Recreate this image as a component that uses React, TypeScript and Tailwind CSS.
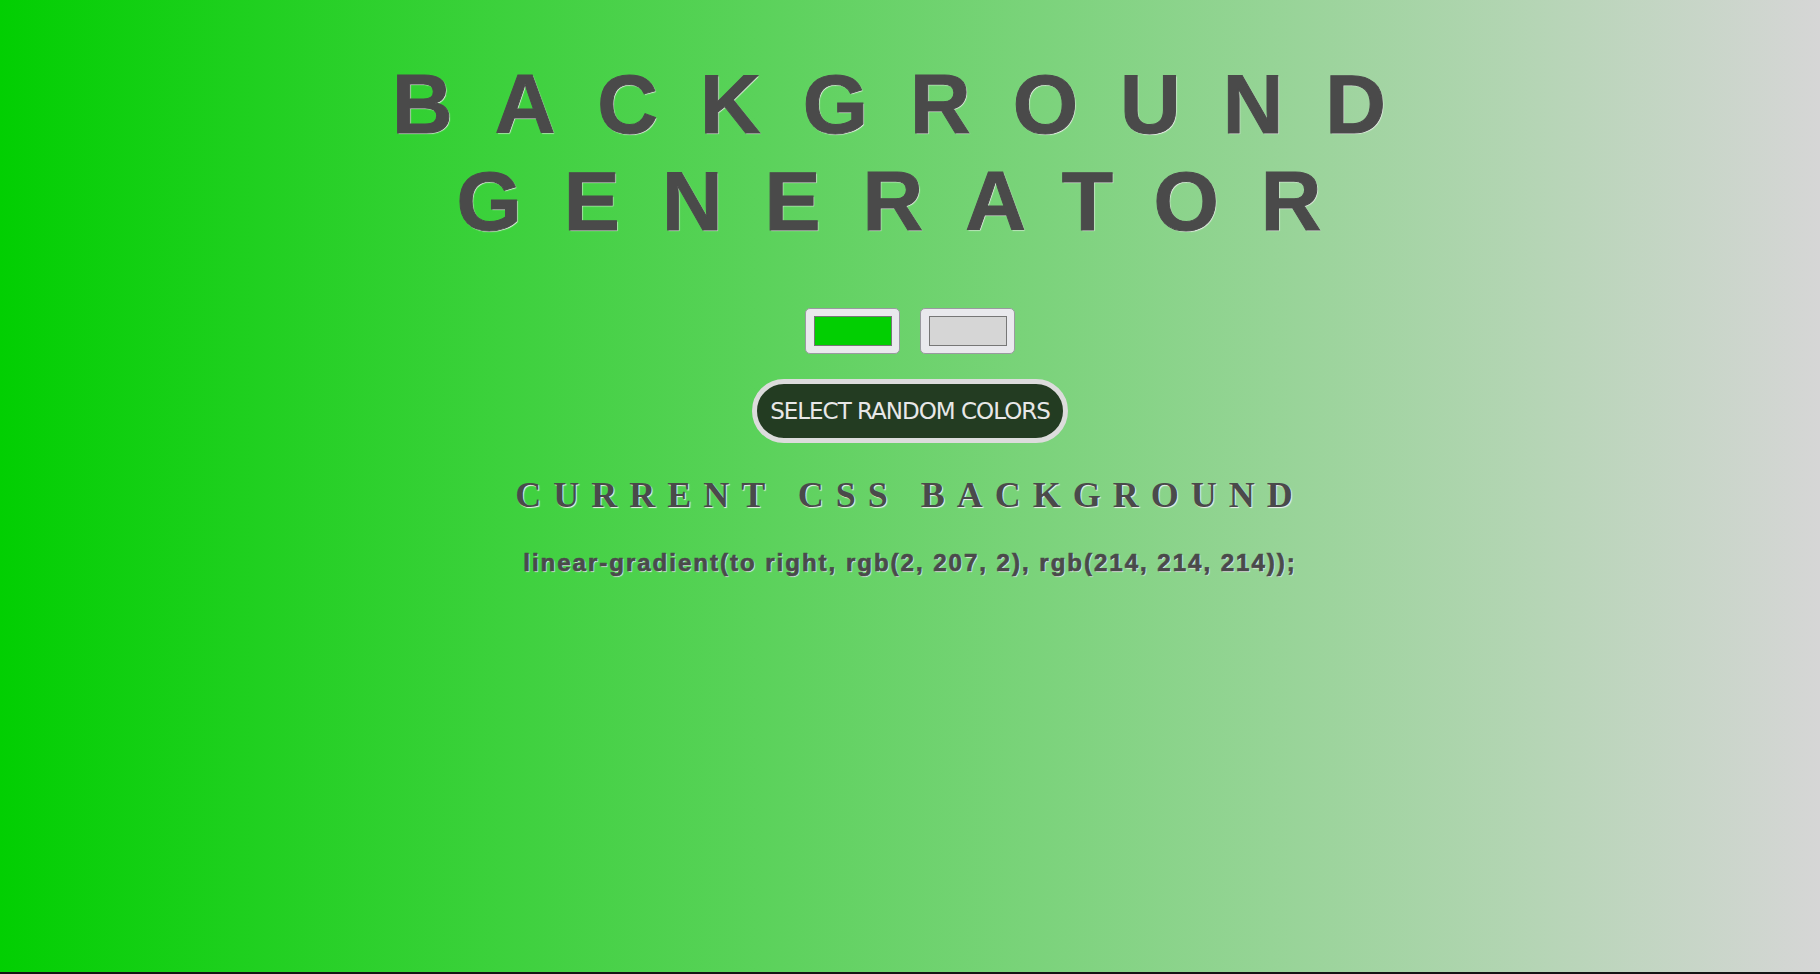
export default function App() {
  const from = "rgb(2, 207, 2)";
  const to = "rgb(214, 214, 214)";

  return (
    <div className="flex flex-col">
      <div className="flex h-[972px] flex-col items-center bg-[linear-gradient(to_right,#02cf02,#d6d6d6)]">
        <h1 className="mt-[56px] text-center font-['Liberation_Sans',Arial,sans-serif] text-[84px] font-bold leading-[97px] tracking-[42px] text-[#4a4a4a] [-webkit-text-stroke:1px_#4a4a4a] [text-shadow:1px_1px_1px_#f0f0f0]">
          <div>BACKGROUND</div>
          <div>GENERATOR</div>
        </h1>

        <div className="mt-[58px] flex gap-[20px]">
          <div className="flex h-[46px] w-[95px] items-center justify-center rounded-[5px] border border-[#9a9aa0] bg-[#e9e9ed]">
            <div className="h-[30px] w-[78px] border border-[#777] bg-[#02cf02]" />
          </div>
          <div className="flex h-[46px] w-[95px] items-center justify-center rounded-[5px] border border-[#9a9aa0] bg-[#e9e9ed]">
            <div className="h-[30px] w-[78px] border border-[#777] bg-[#d6d6d6]" />
          </div>
        </div>

        <button className="mt-[25px] flex h-[64px] w-[316px] items-center justify-center rounded-full border-[5px] border-[#dcdcdc] bg-[#233c22] font-['DejaVu_Sans',Verdana,sans-serif] text-[23px] tracking-[-1px] text-[#e8e8e8]">
          SELECT RANDOM COLORS
        </button>

        <h3 className="mt-[31px] font-['Liberation_Serif','Times_New_Roman',serif] text-[36px] font-bold leading-[normal] tracking-[12px] text-[#4a4a4a] [text-shadow:1px_1px_1px_#f0f0f0]">
          CURRENT CSS BACKGROUND
        </h3>

        <p className="mt-[33px] font-['Liberation_Sans',Arial,sans-serif] text-[24px] font-bold leading-[normal] tracking-[2px] text-[#4a4a4a] [-webkit-text-stroke:0.7px_#4a4a4a] [text-shadow:1px_1px_1px_#f0f0f0]">
          linear-gradient(to right, {from}, {to});
        </p>
      </div>
      <div className="h-[2px] bg-[#141414]" />
    </div>
  );
}
